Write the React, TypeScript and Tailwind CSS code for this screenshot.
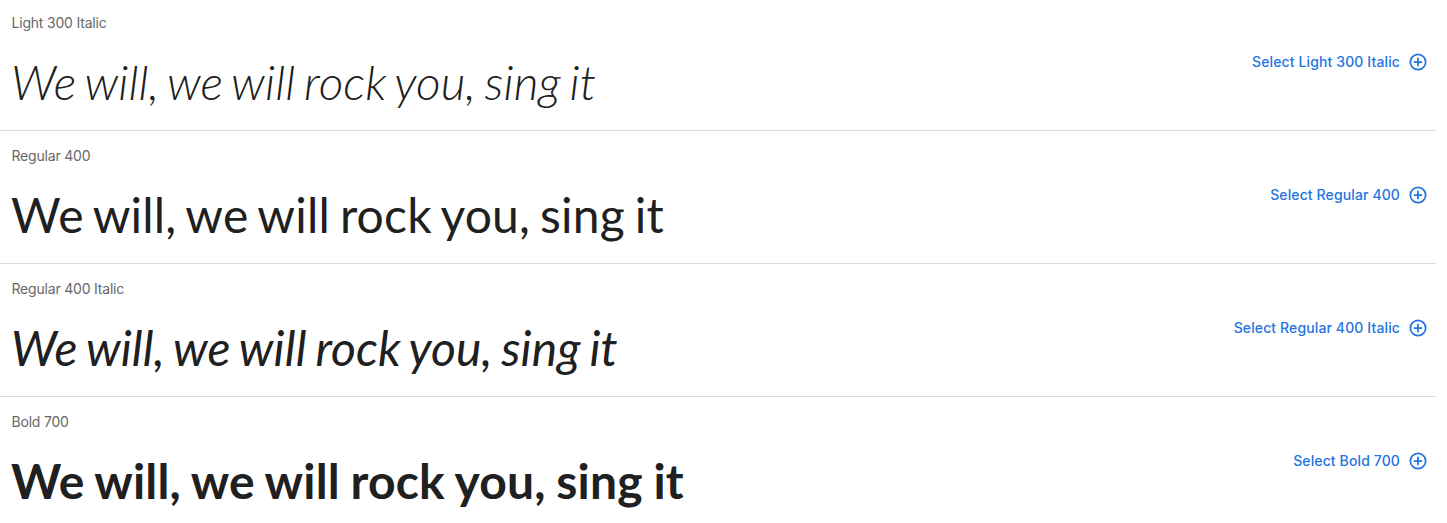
const sample = "We will, we will rock you, sing it";

const variants = [
  { name: "Light 300 Italic", style: "font-light italic tracking-[0.06px] [word-spacing:-3.4px]" },
  { name: "Regular 400", style: "font-normal tracking-[0.2px] [word-spacing:-2.6px]" },
  { name: "Regular 400 Italic", style: "font-normal italic tracking-[0.1px] [word-spacing:-2.5px]" },
  { name: "Bold 700", style: "font-bold tracking-[0.2px] [word-spacing:-1.2px]" },
];

export default function App() {
  return (
    <main className="h-[523px] w-[1447px] overflow-hidden bg-white">
      <div className="-mt-0.5 w-[1436px]">
        {variants.map((v) => (
          <section key={v.name} className="flex h-[133px] justify-between border-b border-[#dadada] pl-3 pr-2">
            <div className="pt-[15px]">
              <div className="-ml-[0.5px] font-[Inter,sans-serif] text-sm leading-5 tracking-[-0.2px] text-[#686868]">{v.name}</div>
              <div className={`-ml-px mt-5 whitespace-nowrap font-[Lato,sans-serif] text-[48px] leading-[58px] text-[#202020] ${v.style}`}>{sample}</div>
            </div>
            <button className="mt-[54px] flex h-5 items-center gap-2 font-[Inter,sans-serif] text-sm font-medium text-[#2374df]">
              <span className="tracking-[0.12px]">Select {v.name}</span>
              <svg className="size-5" viewBox="0 0 24 24" fill="none" stroke="currentColor" strokeWidth="2.1">
                <circle cx="12" cy="12" r="9.2" />
                <path d="M12 7v10M7 12h10" />
              </svg>
            </button>
          </section>
        ))}
      </div>
    </main>
  );
}
